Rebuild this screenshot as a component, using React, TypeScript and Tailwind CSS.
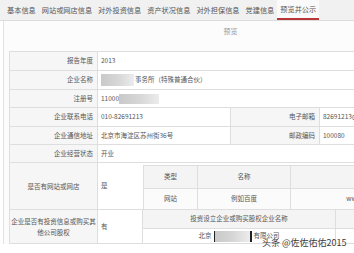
import type { ReactNode } from "react";

const tabs = [
  "基本信息",
  "网站或网店信息",
  "对外投资信息",
  "资产状况信息",
  "对外担保信息",
  "党建信息",
  "预览并公示",
];

function Label({ children, center }: { children: ReactNode; center?: boolean }) {
  return (
    <div
      className={
        "flex w-[88px] shrink-0 items-center border-r border-[#dedede] bg-[#f6f6f6] " +
        (center ? "justify-center text-center leading-[11px] whitespace-nowrap" : "justify-end pr-[4px]")
      }
    >
      {children}
    </div>
  );
}

function Blur({ w, h = "h-[12px]" }: { w: string; h?: string }) {
  return (
    <span
      className={`inline-block ${w} ${h} bg-linear-to-r from-[#c9c9c9] via-[#d6d6d6] to-[#ececec] blur-[0.6px]`}
    />
  );
}

export default function App() {
  return (
    <div className="relative h-[253px] w-[354px] overflow-hidden bg-white font-['Noto_Sans_CJK_SC','Noto_Sans',sans-serif] text-[#555]">
      {/* tab strip */}
      <div className="flex h-[21px] items-stretch border-b border-[#dcdcdc] bg-[#f1f1f1] pl-[4px] text-[7.2px]">
        {tabs.map((t, i) => (
          <div
            key={t}
            className={
              "flex items-center px-[3px] " +
              (i === tabs.length - 1 ? "border-b-2 border-[#b8353a] bg-[#fafafa]" : "")
            }
          >
            {t}
          </div>
        ))}
      </div>

      <div className="ml-[3px] w-[470px] border-l border-[#e2e2e2] bg-[#fcfcfc]">
        <div className="flex h-[30px] justify-center pr-[2px] pt-[5px] text-[7px] text-[#999]">
          <span className="ml-[-14px]">预览</span>
        </div>

        <div className="ml-[5px] w-[460px] border-t border-l border-[#dedede] bg-white text-[6.5px]">
          <div className="flex h-[19px] border-b border-[#dedede]">
            <Label>报告年度</Label>
            <div className="flex flex-1 items-center pl-[3px]">2013</div>
          </div>
          <div className="flex h-[19px] border-b border-[#dedede]">
            <Label>企业名称</Label>
            <div className="flex flex-1 items-center gap-[1px] pl-[3px]">
              <Blur w="w-[33px]" />
              <span>事务所（特殊普通合伙）</span>
            </div>
          </div>
          <div className="flex h-[18px] border-b border-[#dedede]">
            <Label>注册号</Label>
            <div className="flex flex-1 items-center pl-[3px]">
              <span>11000</span>
              <Blur w="w-[40px]" h="h-[10px]" />
            </div>
          </div>
          <div className="flex h-[19px] border-b border-[#dedede]">
            <Label>企业联系电话</Label>
            <div className="flex w-[133px] items-center border-r border-[#dedede] pl-[3px]">
              010-82691213
            </div>
            <div className="flex w-[89px] items-center justify-end border-r border-[#dedede] bg-[#f6f6f6] pr-[4px]">
              电子邮箱
            </div>
            <div className="flex flex-1 items-center pl-[3px]">82691213@qq.com</div>
          </div>
          <div className="flex h-[18px] border-b border-[#dedede]">
            <Label>企业通信地址</Label>
            <div className="flex w-[133px] items-center border-r border-[#dedede] pl-[3px]">
              北京市海淀区苏州街36号
            </div>
            <div className="flex w-[89px] items-center justify-end border-r border-[#dedede] bg-[#f6f6f6] pr-[4px]">
              邮政编码
            </div>
            <div className="flex flex-1 items-center pl-[3px]">100080</div>
          </div>
          <div className="flex h-[18px] border-b border-[#dedede]">
            <Label>企业经营状态</Label>
            <div className="flex flex-1 items-center pl-[3px]">开业</div>
          </div>

          <div className="flex h-[47px] border-b border-[#dedede]">
            <Label center>是否有网站或网店</Label>
            <div className="flex w-[45px] items-center pl-[3px]">是</div>
            <div className="flex-1 pt-[2px]">
              <div className="border-t border-l border-[#dedede] text-center">
                <div className="flex h-[23px] border-b border-[#dedede] bg-[#f4f4f4]">
                  <div className="flex w-[54px] items-center justify-center border-r border-[#dedede]">类型</div>
                  <div className="flex w-[93px] items-center justify-center border-r border-[#dedede]">名称</div>
                  <div className="flex w-[160px] items-center justify-center">网址</div>
                </div>
                <div className="flex h-[20px] bg-[#fbfbfb]">
                  <div className="flex w-[54px] items-center justify-center border-r border-[#dedede]">网站</div>
                  <div className="flex w-[93px] items-center justify-center border-r border-[#dedede]">例如百度</div>
                  <div className="flex w-[160px] items-center justify-center">www.baidu.com</div>
                </div>
              </div>
            </div>
          </div>

          <div className="flex h-[34px] border-b border-[#dedede]">
            <Label center>
              企业是否有投资信息或购买其
              <br />
              他公司股权
            </Label>
            <div className="flex w-[45px] items-center border-r border-[#dedede] pl-[3px]">有</div>
            <div className="flex flex-1 flex-col text-center">
              <div className="flex h-[19px] border-b border-[#dedede] bg-[#f4f4f4]">
                <div className="flex w-[193px] items-center justify-center border-r border-[#dedede]">
                  投资设立企业或购买股权企业名称
                </div>
                <div className="flex-1" />
              </div>
              <div className="flex flex-1">
                <div className="flex w-[193px] items-center justify-center border-r border-[#dedede]">
                  <span>北京</span>
                  <span className="mx-[2px] flex h-[11px] items-stretch">
                    <span className="w-[1.5px] bg-[#222]" />
                    <Blur w="w-[35px]" h="h-[11px]" />
                    <span className="w-[1.5px] bg-[#222]" />
                  </span>
                  <span>有限公司</span>
                </div>
                <div className="flex-1" />
              </div>
            </div>
          </div>
        </div>
      </div>

      <div className="absolute bottom-[5px] left-[262px] whitespace-nowrap text-[9px] leading-[11px] text-[#3a3a3a] [text-shadow:0_0_2px_#fff,0_0_1px_#fff]">
        头条 @佐佐佑佑2015
      </div>
    </div>
  );
}
